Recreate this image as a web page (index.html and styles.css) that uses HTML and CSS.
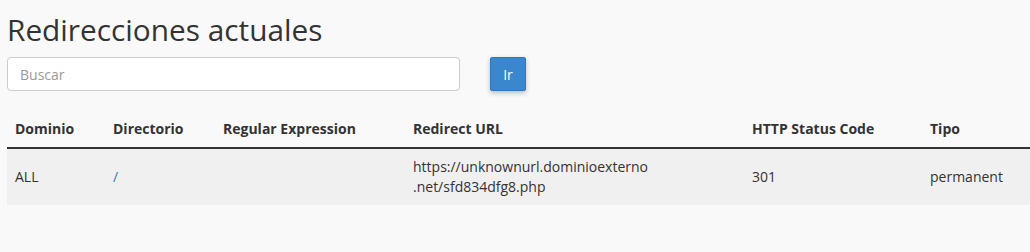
FILE: index.html
```html
<!DOCTYPE html>
<html lang="es">
<head>
  <meta charset="UTF-8" />
  <title>Redirecciones actuales</title>
  <link rel="stylesheet" href="styles.css">
</head>
<body>

  <div class="page">
    <h1>Redirecciones actuales</h1>

    <!-- Search -->
    <form class="search-bar" onsubmit="return false;">
      <input type="text" class="search-input" placeholder="Buscar">
      <button type="submit" class="btn-go">Ir</button>
    </form>

    <!-- Redirects table -->
    <table class="redirects">
      <thead>
        <tr>
          <th class="col-domain">Dominio</th>
          <th class="col-dir">Directorio</th>
          <th class="col-regex">Regular Expression</th>
          <th class="col-url">Redirect URL</th>
          <th class="col-status">HTTP Status Code</th>
          <th class="col-type">Tipo</th>
        </tr>
      </thead>
      <tbody>
        <tr>
          <td>ALL</td>
          <td><a href="#">/</a></td>
          <td></td>
          <td>https://unknownurl.dominioexterno<br>.net/sfd834dfg8.php</td>
          <td>301</td>
          <td>permanent</td>
        </tr>
      </tbody>
    </table>
  </div>

</body>
</html>
```

FILE: styles.css
```css
*, *::before, *::after {
  box-sizing: border-box;
}

body, html {
  margin: 0;
  padding: 0;
  background: #f9f9f9;
  font-family: 'Open Sans', sans-serif;
  font-size: 14px;
  color: #333;
}

.page {
  padding: 0 0 0 7px;
}

h1 {
  font-size: 29.8px;
  font-weight: 400;
  line-height: 36px;
  margin: 12px 0 9px 0;
  color: #333;
}

.search-bar {
  display: flex;
  align-items: center;
  gap: 30px;
  margin-bottom: 20px;
}

.search-input {
  width: 453px;
  height: 34px;
  padding: 6px 12px;
  font-family: 'Open Sans', sans-serif;
  font-size: 14px;
  color: #555;
  background: #fff;
  border: 1px solid #ccc;
  border-radius: 4px;
}

.search-input::placeholder {
  color: #999;
}

.btn-go {
  width: 36px;
  height: 34px;
  padding: 0;
  font-family: 'Open Sans', sans-serif;
  font-size: 14px;
  color: #fff;
  background: #3a87cd;
  border: 1px solid #2f78bb;
  border-radius: 2px;
  box-shadow: 0 2px 5px rgba(0, 0, 0, 0.25);
  cursor: pointer;
}

.redirects {
  width: 1030px;
  border-collapse: collapse;
}

.redirects th,
.redirects td {
  text-align: left;
  padding: 8px;
  line-height: 20px;
  vertical-align: middle;
}

.redirects th {
  font-weight: 700;
  color: #333;
  border-bottom: 2px solid #333;
}

.redirects tbody tr {
  background: #f0f0f0;
}

.redirects a {
  color: #337ab7;
  text-decoration: none;
}

.col-domain { width: 98px; }
.col-dir { width: 110px; }
.col-regex { width: 190px; }
.col-url { width: 339px; }
.col-status { width: 178px; }
```
